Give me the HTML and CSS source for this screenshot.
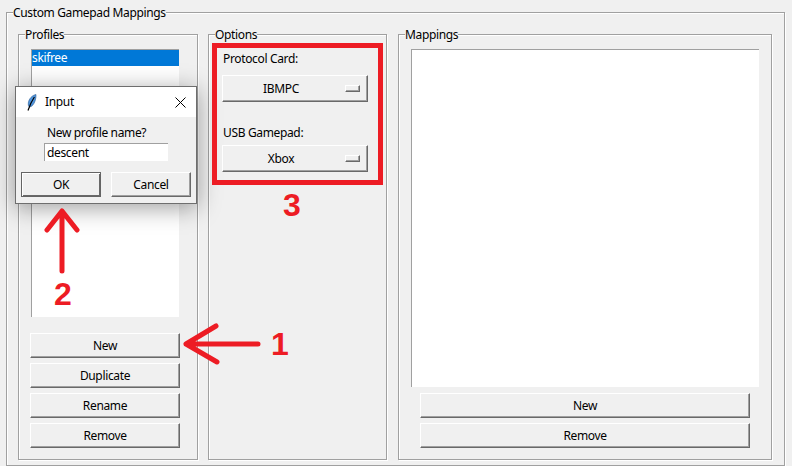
FILE: index.html
```html
<!DOCTYPE html>
<html lang="en">
<head>
<meta charset="utf-8">
<title>Custom Gamepad Mappings</title>
<link rel="stylesheet" href="styles.css">
</head>
<body>
<fieldset class="frame outer">
  <legend>Custom Gamepad Mappings</legend>
  <div class="columns">
    <fieldset class="frame profiles">
      <legend>Profiles</legend>
      <div class="listbox profile-list"><div class="item selected">skifree</div></div>
      <div class="btn-stack profile-buttons">
        <button class="btn">New</button>
        <button class="btn">Duplicate</button>
        <button class="btn">Rename</button>
        <button class="btn">Remove</button>
      </div>
    </fieldset>
    <fieldset class="frame options">
      <legend>Options</legend>
      <div class="opt-label first">Protocol Card:</div>
      <button class="btn menu"><span class="menu-text">IBMPC</span><span class="indicator"></span></button>
      <div class="opt-label second">USB Gamepad:</div>
      <button class="btn menu"><span class="menu-text">Xbox</span><span class="indicator"></span></button>
    </fieldset>
    <fieldset class="frame mappings">
      <legend>Mappings</legend>
      <div class="listbox mapping-list"></div>
      <div class="btn-stack mapping-buttons">
        <button class="btn">New</button>
        <button class="btn">Remove</button>
      </div>
    </fieldset>
  </div>
</fieldset>

<div class="dialog">
  <div class="titlebar">
    <svg class="feather" width="10" height="17" viewBox="0 0 10 17"><path d="M9 .5C5.200 1.200 1.800 4.800 1.300 9c-.2 1.600 0 3 .7 3.800 1.200.2 2.600-.4 3.700-1.600C7.900 8.800 9.200 4.500 9 .5Z" fill="#4f94dc" stroke="#2a5d94" stroke-width=".6"/><path d="M7.400 3C5 6.500 2.800 11 1 16.500" fill="none" stroke="#000" stroke-width="1.200"/></svg>
    <span class="title">Input</span>
    <svg class="close" width="11" height="11" viewBox="0 0 11 11"><path d="M.5 .5 10.500 10.500M10.500 .5 .5 10.500" stroke="#000" stroke-width="1" fill="none"/></svg>
  </div>
  <div class="dialog-body">
    <div class="prompt">New profile name?</div>
    <div class="entry">descent</div>
    <div class="dialog-buttons">
      <button class="btn default">OK</button>
      <button class="btn">Cancel</button>
    </div>
  </div>
</div>

<div class="redbox"></div>
<svg class="arrows" width="792" height="466" viewBox="0 0 792 466">
  <g fill="none" stroke="#ed1c24" stroke-width="5" stroke-linecap="round" stroke-linejoin="round">
    <path d="M258 344H186M216 326 186 344 217 362"/>
    <path d="M62 271V211M47 230 62 211 77 230"/>
  </g>
</svg>
<span class="num n1">1</span>
<span class="num n2">2</span>
<span class="num n3">3</span>
</body>
</html>
```
FILE: styles.css
```css
* { box-sizing: border-box; }
html, body { margin: 0; padding: 0; }
body {
  width: 792px;
  height: 466px;
  overflow: hidden;
  background: #f0f0f0;
  color: #000;
  font: 12px/14px "Noto Sans", "Liberation Sans", sans-serif;
  letter-spacing: -.35px;
  position: relative;
  padding: 5px 0 0 6px;
}
.frame {
  margin: 0;
  min-width: 0;
  border: 1px solid #a0a0a0;
  box-shadow: 1px 1px 0 #fff, inset 1px 1px 0 #fff;
}
.frame > legend {
  padding: 1px 0 0;
  line-height: 14px;
  height: 14px;
  background: #f0f0f0;
}
.outer { width: 779px; height: 461px; padding: 8px 11px 0; }
.outer > legend { margin-left: -5px; }
.columns { display: flex; }
.profiles { width: 180px; height: 433px; padding: 8px 11px 0; margin-right: 10px; }
.profiles > legend { margin-left: -5px; }
.options { width: 179px; height: 433px; padding: 8px 13px 0; margin-right: 11px; }
.options > legend { margin-left: -7px; }
.mappings { width: 374px; height: 433px; padding: 8px 12px 0; }
.mappings > legend { margin-left: -6px; }

.listbox {
  background: #fff;
  border-top: 1px solid #a0a0a0;
  border-left: 1px solid #a0a0a0;
}
.profile-list { width: 148px; height: 268px; margin-left: 1px; }
.mapping-list { width: 348px; height: 338px; }
.item { height: 16px; line-height: 16px; }
.item.selected { background: #0078d7; color: #fff; }

.btn {
  display: block;
  padding: 0;
  margin: 0;
  font: inherit;
  letter-spacing: inherit;
  color: #000;
  text-align: center;
  background: #f0f0f0;
  border: 1px solid;
  border-color: #fff #696969 #696969 #fff;
  box-shadow: inset -1px -1px 0 #a0a0a0;
  border-radius: 0;
}
.btn-stack { display: flex; flex-direction: column; gap: 5px; }
.btn-stack .btn { height: 25px; }
.profile-buttons { width: 150px; margin-top: 16px; }
.mapping-buttons { width: 330px; margin: 6px 0 0 9px; }

.opt-label { height: 14px; margin-left: 1px; }
.opt-label.first { margin-top: 3px; margin-bottom: 9px; }
.opt-label.second { margin-top: 24px; margin-bottom: 5px; }
.menu {
  width: 146px;
  height: 27px;
  display: flex;
  align-items: center;
}
.menu-text { flex: 1; text-align: center; padding-right: 6px; }
.indicator {
  width: 15px;
  height: 7px;
  margin-right: 7px;
  background: #f0f0f0;
  border: 1px solid;
  border-color: #fff #696969 #696969 #fff;
  box-shadow: inset -1px -1px 0 #a0a0a0;
}

.dialog {
  position: absolute;
  left: 15px;
  top: 86px;
  width: 182px;
  height: 118px;
  background: #f0f0f0;
  border: 1px solid #6e6e6e;
  box-shadow: 0 4px 22px rgba(0, 0, 0, .38);
  display: flex;
  flex-direction: column;
}
.titlebar {
  height: 30px;
  background: #fff;
  display: flex;
  align-items: center;
  padding: 0 10px 0 11px;
}
.title { margin-left: 8px; flex: 1; }
.dialog-body { flex: 1; display: flex; flex-direction: column; }
.prompt { margin: 9px 0 0 31px; height: 14px; }
.entry {
  width: 124px;
  height: 18px;
  margin: 3px 0 0 28px;
  padding-left: 2px;
  line-height: 18px;
  background: #fff;
  border-top: 1px solid #a0a0a0;
  border-left: 1px solid #a0a0a0;
}
.dialog-buttons { display: flex; gap: 10px; margin: 11px 0 0 5px; }
.dialog-buttons .btn { width: 80px; height: 25px; }
.btn.default {
  border: 1px solid #646464;
  box-shadow: inset 1px 1px 0 #fff, inset -1px -1px 0 #696969;
}

.redbox {
  position: absolute;
  left: 212px;
  top: 43px;
  width: 171px;
  height: 142px;
  border: 5px solid #ed1c24;
}
.arrows { position: absolute; left: 0; top: 0; pointer-events: none; }
.num {
  position: absolute;
  font: bold 32px/32px "Liberation Sans", Arial, sans-serif;
  letter-spacing: 0;
  color: #ed1c24;
}
.n1 { left: 271px; top: 328px; }
.n2 { left: 54px; top: 278px; }
.n3 { left: 283px; top: 189px; }
```
